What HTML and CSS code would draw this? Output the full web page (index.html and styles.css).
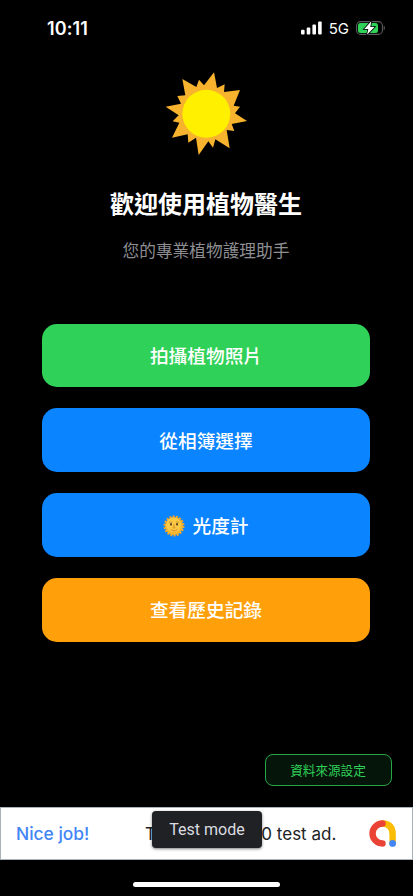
FILE: index.html
```html
<!DOCTYPE html>
<html lang="zh-Hant">
<head>
  <meta charset="UTF-8" />
  <meta name="viewport" content="width=device-width, initial-scale=1.0"/>
  <title>植物醫生</title>
  <link rel="stylesheet" href="styles.css">
</head>
<body>
  <div class="status-bar">
    <span class="time">10:11</span>
    <div class="status-icons">
      <svg class="signal" viewBox="0 0 21 14" fill="#fff">
        <rect x="0" y="8.7" width="3.6" height="4.8" rx="1"/>
        <rect x="5.7" y="6.5" width="3.6" height="7" rx="1"/>
        <rect x="11.4" y="3.6" width="3.6" height="9.9" rx="1"/>
        <rect x="17.1" y="0.5" width="3.6" height="13" rx="1"/>
      </svg>
      <span class="network">5G</span>
      <svg class="battery" viewBox="0 0 30 16">
        <rect x="0.6" y="1.6" width="25.8" height="12.8" rx="4" fill="none" stroke="#5c5c5e" stroke-width="1.1"/>
        <path d="M27.7 5.8c1.6.5 1.6 3.9 0 4.4z" fill="#5c5c5e"/>
        <rect x="2" y="3" width="20" height="10" rx="2.5" fill="#30d158"/>
        <path d="M15.3 1.200 8.300 8.900h4L11 14.800 18.500 7.100h-4.200z" fill="#fff" stroke="#000" stroke-width="1.6" paint-order="stroke"/>
      </svg>
    </div>
  </div>

  <main class="content">
    <svg class="sun" viewBox="0 0 300 288">
      <path d="M174 19 183 66 206 55 204 78 252 72 233 119 252 122 237 142 273 165 227 174 235 195 212 192 221 247 178 220 171 245 157 226 128 267 120 215 97 230 95 205 48 215 70 170 50 166 68 148 29 122 75 113 64 90 88 88 79 39 121 63 129 41 144 58Z" fill="#f7b32d"/>
      <circle cx="151" cy="143.500" r="72" fill="#fff000"/>
    </svg>
    <h1>歡迎使用植物醫生</h1>
    <p class="subtitle">您的專業植物護理助手</p>

    <div class="buttons">
      <button class="btn green">拍攝植物照片</button>
      <button class="btn blue">從相簿選擇</button>
      <button class="btn blue">
        <svg class="sun-face" viewBox="0 0 66 66">
          <circle cx="33" cy="33" r="28" fill="none" stroke="#f0a52b" stroke-width="7" stroke-dasharray="6 3.770"/>
          <circle cx="33" cy="33" r="27" fill="#f6b62f"/>
          <circle cx="32" cy="30" r="22" fill="#fcca45"/>
          <path d="M18 23q5-4 10-1M38 22q5-3 10 1" fill="none" stroke="#b97621" stroke-width="2"/>
          <ellipse cx="24" cy="28" rx="3" ry="4" fill="#5d4526"/>
          <ellipse cx="42" cy="28" rx="3" ry="4" fill="#5d4526"/>
          <path d="M33 28v9M29 38q4 3 8 0M23 43q10 10 20 0" fill="none" stroke="#c8781e" stroke-width="2.5"/>
        </svg>
        光度計
      </button>
      <button class="btn orange">查看歷史記錄</button>
    </div>

    <button class="source-btn">資料來源設定</button>
  </main>

  <div class="ad">
    <span class="ad-title">Nice job!</span>
    <span class="ad-text"><span class="tight">This is a 320x5</span>0 test ad.</span>
    <svg class="ad-logo" viewBox="0 0 80 80" fill="none" stroke-width="19" stroke-linecap="round">
      <path d="M40 10.500Q70 12 70 42V68" stroke="#fbbc04"/>
      <path d="M40 10.500A29.500 29.500 0 0 0 40 69.500" stroke="#ea4335"/>
      <circle cx="70" cy="69.500" r="10" fill="#4285f4"/>
    </svg>
    <span class="test-mode">Test mode</span>
  </div>
  <div class="home-bar"></div>
</body>
</html>
```
FILE: styles.css
```css
* {
  box-sizing: border-box;
}

body {
  margin: 0;
  height: 896px;
  display: flex;
  flex-direction: column;
  background-color: #000;
  color: #fff;
  font-family: Inter, "Noto Sans CJK TC", sans-serif;
  overflow: hidden;
}

.status-bar {
  display: flex;
  justify-content: space-between;
  align-items: center;
  height: 56px;
  padding: 0 27px 0 47px;
}

.time {
  font-size: 18px;
  font-weight: 600;
  letter-spacing: 0.1px;
}

.status-icons {
  display: flex;
  align-items: center;
}

.signal {
  width: 21px;
  height: 14px;
}

.network {
  margin: 1px 7px 0 7px;
  font-size: 15px;
  line-height: 18px;
}

.battery {
  width: 30px;
  height: 16px;
}

.content {
  flex: 1;
  display: flex;
  flex-direction: column;
  align-items: center;
  padding: 10px 1px 0 0;
}

.sun {
  width: 100px;
  height: 96px;
}

h1 {
  margin: 25px 0 0;
  font-size: 24px;
  line-height: 36px;
  font-weight: 700;
}

.subtitle {
  margin: 16px 0 0;
  font-size: 16.7px;
  line-height: 24px;
  color: #8e8e93;
}

.buttons {
  display: flex;
  flex-direction: column;
  gap: 21.2px;
  width: 328px;
  margin-top: 60.7px;
}

.btn {
  display: flex;
  justify-content: center;
  align-items: center;
  height: 63.6px;
  padding: 0 0 2px;
  border: none;
  border-radius: 15px;
  color: #fff;
  font-family: inherit;
  font-size: 18.7px;
  font-weight: 500;
}

.green {
  background-color: #30d158;
}

.blue {
  background-color: #0a84ff;
}

.orange {
  background-color: #ff9f0a;
}

.sun-face {
  width: 22px;
  height: 22px;
  margin: 3px 7px 0 0;
}

.source-btn {
  align-self: flex-end;
  width: 127px;
  height: 32px;
  margin: auto 20.5px 21.5px 0;
  padding: 0 0 1px;
  border: 1px solid #26a746;
  border-radius: 8px;
  background-color: #05150a;
  color: #30d158;
  font-family: inherit;
  font-size: 12.6px;
}

/* Bottom banner */
.ad {
  position: relative;
  display: flex;
  align-items: center;
  height: 53px;
  padding: 0 16px 0 15px;
  border: 1px solid #a9b4ba;
  background-color: #fff;
  font-family: Inter, sans-serif;
  font-size: 17px;
}

.ad-title {
  width: 129px;
  color: #4285f4;
  font-size: 17.4px;
  font-weight: 500;
}

.ad-text {
  color: #202124;
  white-space: nowrap;
}

.tight {
  letter-spacing: -0.4px;
}

.ad-logo {
  width: 27px;
  height: 27px;
  margin-left: auto;
}

.test-mode {
  position: absolute;
  top: 3px;
  left: 151px;
  width: 110px;
  height: 37px;
  border-radius: 4px;
  background-color: #202124;
  box-shadow: 0 1px 3px rgba(0, 0, 0, 0.5);
  color: #dadce0;
  font-family: Roboto, sans-serif;
  font-size: 16px;
  line-height: 37px;
  text-align: center;
}

.home-bar {
  width: 147px;
  height: 5px;
  margin: 22px auto 9px;
  border-radius: 3px;
  background-color: #fff;
}
```
